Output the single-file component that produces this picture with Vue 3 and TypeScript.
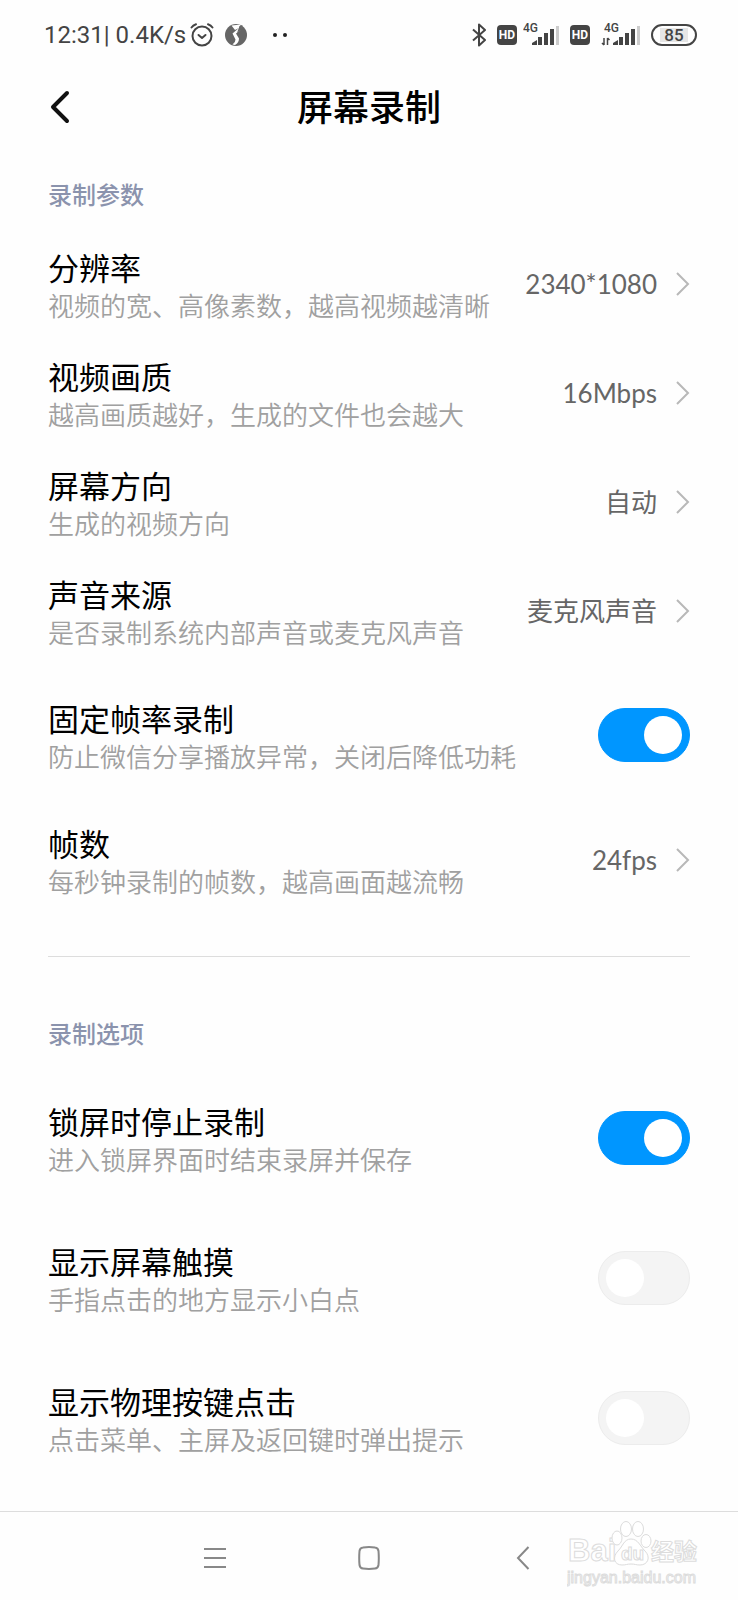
<script setup lang="ts">
import { reactive } from 'vue'

interface Item {
  id: string
  title: string
  desc: string
  value?: string
  on?: boolean
}

interface Section {
  id: string
  label: string
  items: Item[]
}

const sections = reactive<Section[]>([
  {
    id: 'params',
    label: '录制参数',
    items: [
      { id: 'resolution', title: '分辨率', desc: '视频的宽、高像素数，越高视频越清晰', value: '2340*1080' },
      { id: 'quality', title: '视频画质', desc: '越高画质越好，生成的文件也会越大', value: '16Mbps' },
      { id: 'orientation', title: '屏幕方向', desc: '生成的视频方向', value: '自动' },
      { id: 'audio', title: '声音来源', desc: '是否录制系统内部声音或麦克风声音', value: '麦克风声音' },
      { id: 'fixed', title: '固定帧率录制', desc: '防止微信分享播放异常，关闭后降低功耗', on: true },
      { id: 'fps', title: '帧数', desc: '每秒钟录制的帧数，越高画面越流畅', value: '24fps' },
    ],
  },
  {
    id: 'options',
    label: '录制选项',
    items: [
      { id: 'lock', title: '锁屏时停止录制', desc: '进入锁屏界面时结束录屏并保存', on: true },
      { id: 'touch', title: '显示屏幕触摸', desc: '手指点击的地方显示小白点', on: false },
      { id: 'keys', title: '显示物理按键点击', desc: '点击菜单、主屏及返回键时弹出提示', on: false },
    ],
  },
])
</script>

<template>
  <div class="page">
    <div class="status">
      <div class="status-left">
        <span class="clock">12:31| 0.4K/s</span>
        <svg class="alarm" width="24" height="24" viewBox="0 0 24 24" fill="none" stroke="#444" stroke-width="2" stroke-linecap="round" stroke-linejoin="round">
          <circle cx="12" cy="13" r="9.5" />
          <path d="M8.500 12l3.500 3 3.500-3M1.500 4.500Q3 2.300 6 1.300M22.500 4.500Q21 2.300 18 1.300" />
        </svg>
        <svg class="globe" width="22" height="22" viewBox="0 0 22 22">
          <circle cx="11" cy="11" r="11" fill="#666" />
          <path d="M6.500 1.500L10 6l4-2 2-3.500M17 1.500l-2 5-4 3 3 5q0 4-4 6.500l-2.500-.5q3-2 3-5L7.500 9.500 11 6.500z" fill="#fff" />
          <path d="M14.500 2l3-1-1.500 5-4 3z" fill="#666" />
        </svg>
        <svg width="14" height="6" viewBox="0 0 14 6" fill="#222">
          <circle cx="2" cy="3" r="2" />
          <circle cx="12" cy="3" r="2" />
        </svg>
      </div>
      <div class="status-right">
        <svg width="14" height="24" viewBox="0 0 14 24" fill="none" stroke="#444" stroke-width="2" stroke-linejoin="round">
          <path d="M1 6.500l12 10.500-6 5.500v-21l6 5.500L1 17.500" />
        </svg>
        <span class="sim">
          <span class="hd">HD</span>
          <svg width="36" height="32" viewBox="0 -4 36 32" fill="#444">
            <text x="0" y="9" class="net">4G</text>
            <path d="M9 22v-2l5-3v5zM15 14h4v8h-4zM21 10h4v12h-4zM27 6h4v16h-4z" />
            <path d="M33 3h3v19h-3z" fill="#ccc" />
          </svg>
        </span>
        <span class="hd">HD</span>
        <svg width="39" height="32" viewBox="0 -4 39 32" fill="#444">
          <text x="3" y="9" class="net">4G</text>
          <path d="M3 15v7M1 20l2 2M6.500 22v-7M8.500 17l-2-2" fill="none" stroke="#444" stroke-width="1.500" />
          <path d="M12 22v-2l5-3v5zM18 14h4v8h-4zM24 10h4v12h-4zM30 6h4v16h-4z" />
          <path d="M36 3h3v19h-3z" fill="#ccc" />
        </svg>
        <span class="battery"><span class="charge">85</span></span>
      </div>
    </div>

    <header class="header">
      <button class="back" type="button" aria-label="返回">
        <svg width="20" height="34" viewBox="0 0 20 34" fill="none" stroke="#111" stroke-width="4" stroke-linecap="round" stroke-linejoin="round">
          <path d="M17 3L3 17l14 14" />
        </svg>
      </button>
      <h1>屏幕录制</h1>
    </header>

    <main class="content">
      <section v-for="section in sections" :key="section.id" class="section">
        <h2>{{ section.label }}</h2>
        <template v-for="item in section.items" :key="item.id">
          <button v-if="item.value" class="row" type="button">
            <span class="texts">
              <span class="title">{{ item.title }}</span>
              <span class="desc">{{ item.desc }}</span>
            </span>
            <span class="value">{{ item.value }}</span>
            <svg class="chevron" width="14" height="26" viewBox="0 0 14 26" fill="none" stroke="#b8b8b8" stroke-width="2">
              <path d="M1 2l11 11L1 24" />
            </svg>
          </button>
          <label v-else class="row tall">
            <span class="texts">
              <span class="title">{{ item.title }}</span>
              <span class="desc">{{ item.desc }}</span>
            </span>
            <input v-model="item.on" class="switch" type="checkbox" role="switch" />
          </label>
        </template>
      </section>
    </main>

    <nav class="nav">
      <button type="button" aria-label="菜单">
        <svg width="22" height="24" viewBox="0 0 22 24" fill="none" stroke="#888" stroke-width="2">
          <path d="M0 3h22M0 12h22M0 21h22" />
        </svg>
      </button>
      <button type="button" aria-label="主屏">
        <svg width="22" height="24" viewBox="0 0 22 24" fill="none" stroke="#888" stroke-width="2">
          <path d="M5 1.500Q11 .7 17 1.500 20 1.800 20.500 5q.6 7 0 14-.5 3.200-3.500 3.500-6 .8-12 0-3-.3-3.500-3.500-.6-7 0-14Q2 1.800 5 1.500z" />
        </svg>
      </button>
      <button type="button" aria-label="返回">
        <svg width="14" height="24" viewBox="0 0 14 24" fill="none" stroke="#888" stroke-width="2">
          <path d="M12.500 1L2 12l10.500 11" />
        </svg>
      </button>
      <svg class="mark" width="134" height="70" viewBox="0 0 134 70" fill="#fff" stroke="#dcdcdc" stroke-width="1">
        <text x="1" y="40" class="mark-name">Bai</text>
        <text x="84" y="39" class="mark-cn">经验</text>
        <ellipse cx="50" cy="17" rx="5" ry="7" />
        <ellipse cx="59" cy="8" rx="5.500" ry="7.500" />
        <ellipse cx="71" cy="8" rx="5.500" ry="7.500" />
        <ellipse cx="79" cy="20" rx="5" ry="6.500" />
        <path d="M64 18c7 0 9 7 14 12 6 6 3 14-5 14-4 0-5-1-9-1s-5 1-9 1c-8 0-10-8-4-14 5-5 6-12 13-12z" />
        <text x="54" y="39" class="mark-du">du</text>
        <text x="0" y="62" class="mark-url">jingyan.baidu.com</text>
      </svg>
    </nav>
  </div>
</template>

<style>
body {
  margin: 0;
  background: #fff;
}
</style>

<style scoped>
.page {
  display: flex;
  flex-direction: column;
  min-height: 100vh;
  background: #fefefe;
  color: #000;
  font-family: Lato, "Noto Sans CJK SC", sans-serif;
}

button {
  padding: 0;
  border: 0;
  background: none;
  font: inherit;
  color: inherit;
  cursor: pointer;
}

svg {
  display: block;
  flex: none;
}

.status {
  display: flex;
  align-items: center;
  justify-content: space-between;
  height: 69px;
  padding: 0 41px 0 44px;
  color: #444;
}

.status-left,
.status-right,
.sim {
  display: flex;
  align-items: center;
}

.status-right {
  gap: 11px;
}

.sim {
  gap: 6px;
}

.clock {
  font: 400 24px/32px Roboto, sans-serif;
}

.alarm {
  margin-left: 4px;
}

.globe {
  margin: 0 26px 0 11px;
}

.hd {
  width: 20px;
  border-radius: 4px;
  background: #444;
  color: #fff;
  font: 700 12px/20px Roboto, sans-serif;
  text-align: center;
}

.net {
  font: 500 12px Roboto, sans-serif;
}

.battery {
  box-sizing: border-box;
  width: 46px;
  padding: 2px 7px;
  border: 2px solid #444;
  border-radius: 11px;
}

.charge {
  display: block;
  background: #e6e6e6;
  font: 500 17px/14px Roboto, sans-serif;
  text-align: center;
}

.header {
  display: grid;
  grid-template-columns: 20px 1fr 20px;
  align-items: center;
  height: 76px;
  padding: 0 50px;
}

h1 {
  margin: 0;
  font-size: 36px;
  font-weight: 500;
  line-height: 48px;
  text-align: center;
}

.content {
  padding: 0 48px;
}

.section {
  padding-top: 34px;
}

.section + .section {
  margin-top: 42px;
  padding-top: 61px;
  border-top: 1px solid #ddd;
}

h2 {
  margin: 0 0 18px;
  color: #8b93ad;
  font-size: 24px;
  font-weight: 500;
  line-height: 32px;
}

.row {
  display: flex;
  align-items: center;
  width: 100%;
  min-height: 109px;
  text-align: left;
}

.row.tall {
  min-height: 140px;
}

.texts {
  flex: 1;
  min-width: 0;
}

.title,
.desc {
  display: block;
}

.title {
  font-size: 31px;
  line-height: 44px;
}

.desc {
  color: #a0a0a0;
  font-size: 26px;
  font-weight: 350;
  line-height: 32px;
}

.value {
  color: #666;
  font-size: 26px;
  line-height: 32px;
}

.chevron {
  margin-left: 19px;
}

.switch {
  display: flex;
  align-items: center;
  flex: none;
  appearance: none;
  box-sizing: border-box;
  width: 92px;
  height: 54px;
  margin: 0;
  padding: 0 7px;
  border: 1px solid #ececec;
  border-radius: 27px;
  background: #f4f4f4;
  cursor: pointer;
}

.switch::before {
  content: "";
  width: 38px;
  height: 38px;
  border-radius: 50%;
  background: #fff;
}

.switch:checked {
  justify-content: flex-end;
  border-color: #0096ff;
  background: #0096ff;
}

.nav {
  position: relative;
  display: flex;
  align-items: center;
  justify-content: center;
  gap: 106px;
  box-sizing: border-box;
  height: 89px;
  margin-top: auto;
  padding-top: 4px;
  border-top: 1px solid #ddd;
}

.nav button {
  display: flex;
  justify-content: center;
  width: 48px;
}

.mark {
  position: absolute;
  right: 37px;
  top: 9px;
}

.mark-name {
  font: 700 31px "Liberation Sans", sans-serif;
}

.mark-cn {
  font: 700 23px "Noto Sans CJK SC", sans-serif;
}

.mark-du {
  font: 700 19px "Liberation Sans", sans-serif;
}

.mark-url {
  font: 400 16px "Liberation Sans", sans-serif;
}
</style>
